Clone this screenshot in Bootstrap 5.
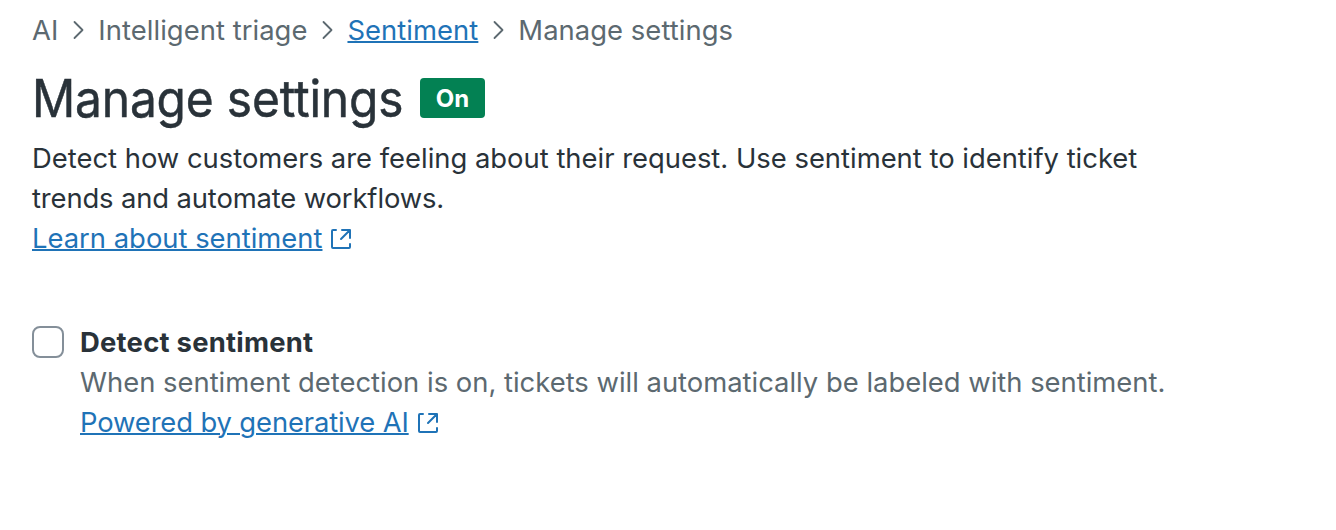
<!DOCTYPE html>
<html lang="en">
<head>
<meta charset="utf-8">
<meta name="viewport" content="width=device-width, initial-scale=1">
<title>Manage settings</title>
<link href="https://cdn.jsdelivr.net/npm/bootstrap@5.3.0/dist/css/bootstrap.min.css" rel="stylesheet">
<style>
body{font-family:Inter,"Liberation Sans",sans-serif;font-size:27.4px;line-height:40px;color:#293239;background:#fff}
a{color:#1f73b7;text-decoration-thickness:2px}
a:hover{color:#13456d}
.page{padding:10px 32px 0}
.ln{display:block;width:max-content;white-space:nowrap}
.muted{color:#5c6970}
.crumbs{height:40px;letter-spacing:.05px}
.chevron,.external{fill:none;stroke:currentColor;stroke-width:1.8;stroke-linecap:round;stroke-linejoin:round;flex:none}
.external{color:#1f73b7;stroke-width:2;margin:1px 0 0 8px}
.title{font-size:51.5px;line-height:64px;padding-top:2px;margin-top:-2px;width:370px;font-weight:400;letter-spacing:-.2px;white-space:nowrap;transform:scaleX(.93);transform-origin:left;-webkit-text-stroke:.5px currentColor}
.status{background:#038153;font-size:24px;line-height:42px;width:65px;height:40px;border-radius:4px;margin-left:18px}
.tight{letter-spacing:-.13px}
.wide{letter-spacing:.25px}
.setting{margin-top:64px}
.form-check-input.box{width:32px;height:32px;border:2px solid #848f99;border-radius:8px;margin:4px 16px 0 0}
</style>
</head>
<body>
<main class="page">
<nav class="crumbs d-flex align-items-center muted" aria-label="breadcrumb">
<span class="ln">AI</span>
<svg class="chevron" width="40" height="40" viewBox="0 0 40 40"><path d="M16.5 12l8 8-8 8"/></svg>
<span class="ln">Intelligent triage</span>
<svg class="chevron" width="40" height="40" viewBox="0 0 40 40"><path d="M16.5 12l8 8-8 8"/></svg>
<a class="ln" href="#">Sentiment</a>
<svg class="chevron" width="40" height="40" viewBox="0 0 40 40"><path d="M16.5 12l8 8-8 8"/></svg>
<span class="ln">Manage settings</span>
</nav>
<div class="d-flex align-items-center mt-3">
<h1 class="title mb-0">Manage settings</h1>
<span class="status text-white fw-bold text-center">On</span>
</div>
<div class="mt-2">
<span class="ln">Detect how customers are feeling about their request. Use sentiment to identify ticket</span>
<span class="ln tight">trends and automate workflows.</span>
<div class="d-flex align-items-center"><a class="ln" href="#">Learn about sentiment</a><svg class="external" width="22" height="22" viewBox="0 0 22 22"><path d="M6 2H3a1 1 0 0 0-1 1v16a1 1 0 0 0 1 1h16a1 1 0 0 0 1-1v-3M12 2h8v8M20 2l-9 9"/></svg></div>
</div>
<div class="setting d-flex">
<input class="form-check-input box" type="checkbox" id="detect">
<div>
<label class="ln fw-bold wide" for="detect">Detect sentiment</label>
<span class="ln muted">When sentiment detection is on, tickets will automatically be labeled with sentiment.</span>
<div class="d-flex align-items-center"><a class="ln tight" href="#">Powered by generative AI</a><svg class="external" width="22" height="22" viewBox="0 0 22 22"><path d="M6 2H3a1 1 0 0 0-1 1v16a1 1 0 0 0 1 1h16a1 1 0 0 0 1-1v-3M12 2h8v8M20 2l-9 9"/></svg></div>
</div>
</div>
</main>
<script src="https://cdn.jsdelivr.net/npm/bootstrap@5.3.0/dist/js/bootstrap.bundle.min.js"></script>
</body>
</html>
